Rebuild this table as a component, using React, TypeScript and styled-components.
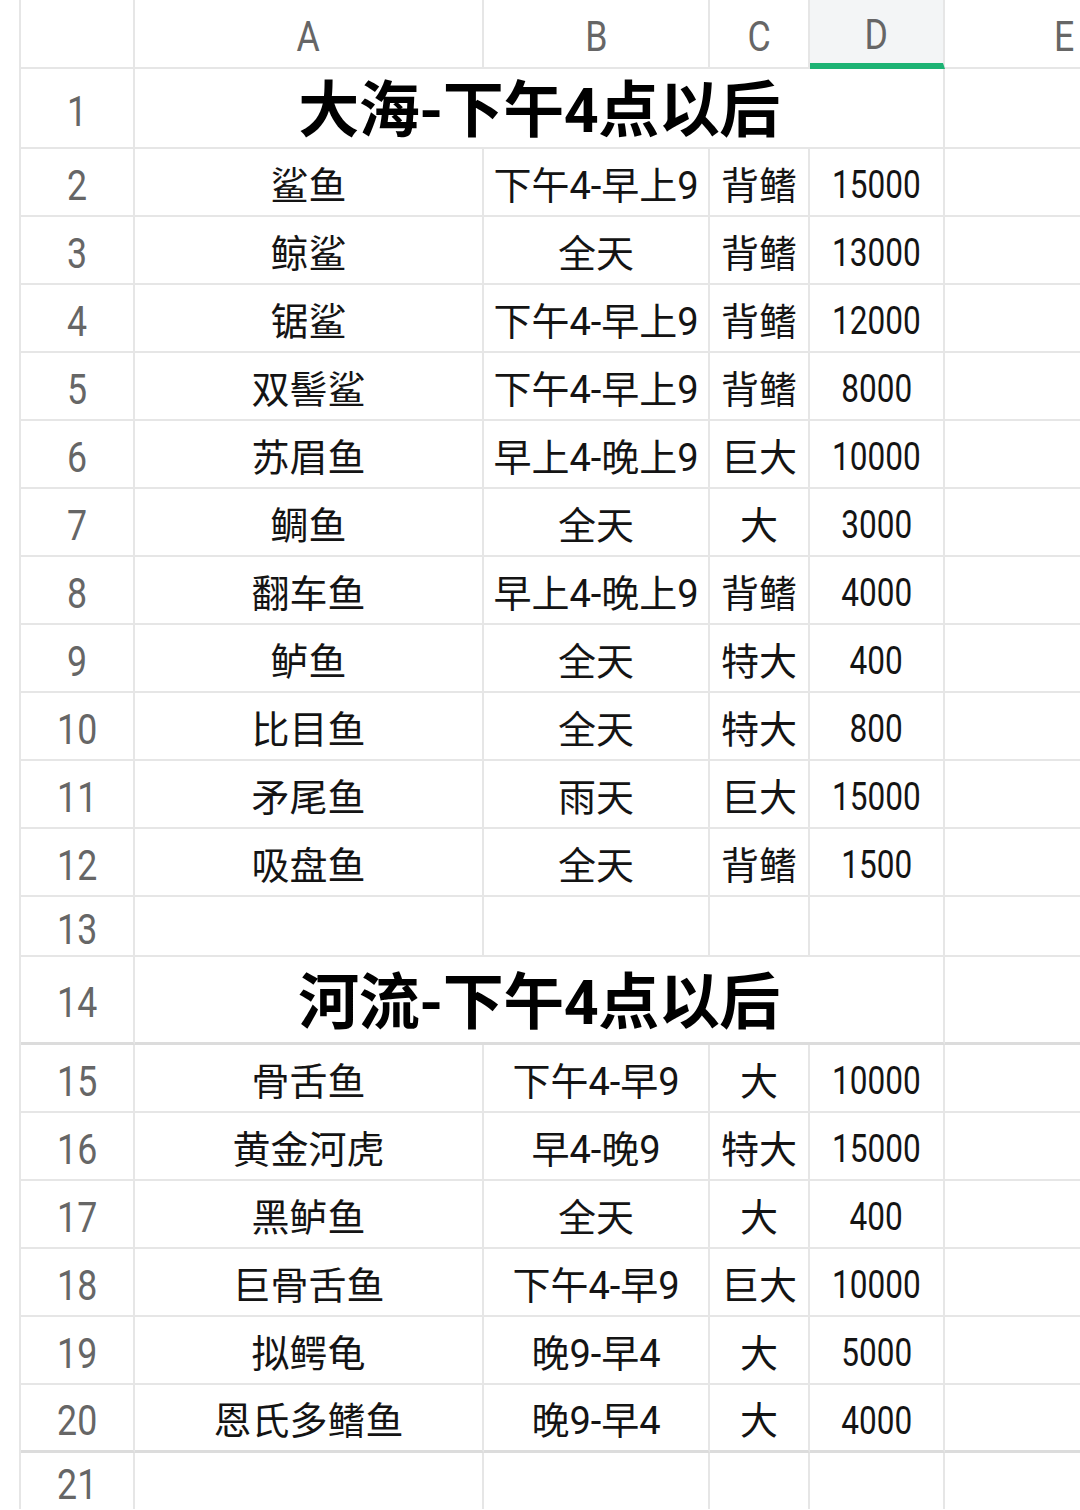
import React from "react";
import styled, { createGlobalStyle } from "styled-components";

const Global = createGlobalStyle`
  html, body { margin: 0; padding: 0; background: #ffffff; overflow: hidden; }
  body { font-family: Roboto, "Noto Sans CJK SC", sans-serif; }
`;

const LINE = "#e6e6e6";
const COLS = "114px 349px 226px 100px 135px 240px";

const Page = styled.div`
  width: 1080px;
  height: 1510px;
  overflow: hidden;
  padding-left: 19px;
  box-sizing: border-box;
  background: #ffffff;
`;

const Sheet = styled.div`
  width: max-content;
  border-left: 2px solid ${LINE};
`;

const Row = styled.div<{ $h: number }>`
  display: grid;
  grid-template-columns: ${COLS};
  height: ${(p) => p.$h}px;
`;

const Cell = styled.div<{ $thick?: boolean; $open?: boolean }>`
  box-sizing: border-box;
  border-right: 2px solid ${LINE};
  border-bottom: ${(p) =>
    p.$open ? "none" : p.$thick ? "3px solid #dcdcdc" : `2px solid ${LINE}`};
  display: flex;
  align-items: center;
  justify-content: center;
  white-space: nowrap;
  overflow: hidden;
  font-family: Roboto, "Noto Sans CJK SC", sans-serif;
  font-size: 38px;
  color: #141414;
`;

const ColHead = styled(Cell)<{ $active?: boolean }>`
  font-size: 43px;
  line-height: 1;
  color: #666666;
  background: ${(p) => (p.$active ? "#f3f5f6" : "#ffffff")};
  border-bottom: ${(p) => (p.$active ? "6px solid #1db374" : `2px solid ${LINE}`)};
`;

const RowNum = styled(Cell)`
  font-size: 43px;
  line-height: 1;
  color: #666666;
`;

const Title = styled(Cell)`
  grid-column: 2 / 6;
  font-family: Roboto, "Noto Sans CJK SC", sans-serif;
  font-weight: 700;
  font-size: 61px;
  line-height: 1.1;
  color: #000000;
  letter-spacing: -0.5px;
  padding-top: 8px;
`;

const Condensed = styled.span`
  display: inline-block;
  transform: translateY(3px) scaleX(0.83);
`;

type Fish = [string, string, string, string];

const sea: Fish[] = [
  ["鲨鱼", "下午4-早上9", "背鳍", "15000"],
  ["鲸鲨", "全天", "背鳍", "13000"],
  ["锯鲨", "下午4-早上9", "背鳍", "12000"],
  ["双髻鲨", "下午4-早上9", "背鳍", "8000"],
  ["苏眉鱼", "早上4-晚上9", "巨大", "10000"],
  ["鲷鱼", "全天", "大", "3000"],
  ["翻车鱼", "早上4-晚上9", "背鳍", "4000"],
  ["鲈鱼", "全天", "特大", "400"],
  ["比目鱼", "全天", "特大", "800"],
  ["矛尾鱼", "雨天", "巨大", "15000"],
  ["吸盘鱼", "全天", "背鳍", "1500"],
];

const river: Fish[] = [
  ["骨舌鱼", "下午4-早9", "大", "10000"],
  ["黄金河虎", "早4-晚9", "特大", "15000"],
  ["黑鲈鱼", "全天", "大", "400"],
  ["巨骨舌鱼", "下午4-早9", "巨大", "10000"],
  ["拟鳄龟", "晚9-早4", "大", "5000"],
  ["恩氏多鳍鱼", "晚9-早4", "大", "4000"],
];

const DataRow: React.FC<{ n: number; fish: Fish; thick?: boolean }> = ({ n, fish, thick }) => (
  <Row $h={68}>
    <RowNum $thick={thick}>
      <Condensed>{n}</Condensed>
    </RowNum>
    <Cell $thick={thick}>{fish[0]}</Cell>
    <Cell $thick={thick}>{fish[1]}</Cell>
    <Cell $thick={thick}>{fish[2]}</Cell>
    <Cell $thick={thick}>
      <Condensed>{fish[3]}</Condensed>
    </Cell>
    <Cell $thick={thick} />
  </Row>
);

const EmptyRow: React.FC<{ n: number; h: number; open?: boolean }> = ({ n, h, open }) => (
  <Row $h={h}>
    <RowNum $open={open}>
      <Condensed>{n}</Condensed>
    </RowNum>
    <Cell $open={open} />
    <Cell $open={open} />
    <Cell $open={open} />
    <Cell $open={open} />
    <Cell $open={open} />
  </Row>
);

const TitleRow: React.FC<{ n: number; h: number; text: string; thick?: boolean }> = ({ n, h, text, thick }) => (
  <Row $h={h}>
    <RowNum $thick={thick}>
      <Condensed>{n}</Condensed>
    </RowNum>
    <Title $thick={thick}>{text}</Title>
    <Cell $thick={thick} />
  </Row>
);

export default function App() {
  return (
    <Page>
      <Global />
      <Sheet>
        <Row $h={69}>
          <ColHead />
          {["A", "B", "C", "D", "E"].map((c) => (
            <ColHead key={c} $active={c === "D"}>
              <Condensed>{c}</Condensed>
            </ColHead>
          ))}
        </Row>
        <TitleRow n={1} h={80} text="大海-下午4点以后" />
        {sea.map((f, i) => (
          <DataRow key={f[0]} n={i + 2} fish={f} />
        ))}
        <EmptyRow n={13} h={60} />
        <TitleRow n={14} h={88} text="河流-下午4点以后" thick />
        {river.map((f, i) => (
          <DataRow key={f[0]} n={i + 15} fish={f} thick={i === river.length - 1} />
        ))}
        <EmptyRow n={21} h={56} open />
      </Sheet>
    </Page>
  );
}
